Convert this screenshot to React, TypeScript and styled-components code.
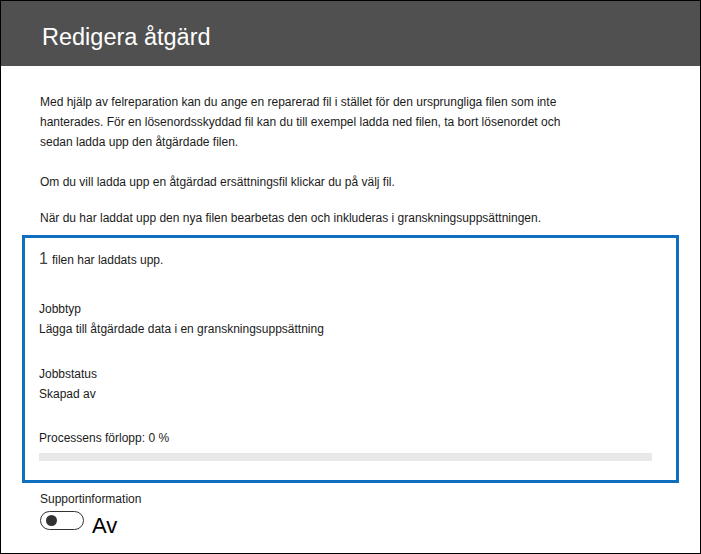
import React from 'react';
import styled, { createGlobalStyle } from 'styled-components';

const GlobalStyle = createGlobalStyle`
    html, body {
        margin: 0;
        padding: 0;
        background: #ffffff;
    }
    * {
        box-sizing: border-box;
    }
`;

const Frame = styled.div`
    width: 701px;
    height: 554px;
    border: 1px solid #000000;
    background: #ffffff;
    font-family: 'Liberation Sans', Arial, sans-serif;
    color: #1b1b1b;
    overflow: hidden;
    display: flex;
    flex-direction: column;
`;

const Header = styled.div`
    height: 65px;
    flex-shrink: 0;
    background: #505050;
    display: flex;
    align-items: center;
    padding-left: 41px;
    padding-top: 8px;
`;

const Title = styled.h1`
    margin: 0;
    font-size: 23.5px;
    font-weight: 400;
    color: #ffffff;
`;

const Body = styled.div`
    padding: 26px 21px 0 21px;
    display: flex;
    flex-direction: column;
`;

const Intro = styled.div`
    padding-left: 18px;
    display: flex;
    flex-direction: column;
`;

const Paragraph = styled.p<{ $gap?: number; $wide?: boolean }>`
    margin: 0 0 ${p => p.$gap ?? 0}px 0;
    font-size: 12px;
    line-height: 20px;
    width: ${p => (p.$wide ? 'auto' : '525px')};
`;

const StatusBox = styled.div`
    margin-top: 7px;
    border: 3px solid #106ebe;
    padding: 11px 24px 19px 14px;
    display: flex;
    flex-direction: column;
`;

const UploadLine = styled.div`
    font-size: 12px;
    line-height: 20px;
    display: flex;
    align-items: baseline;
    gap: 4px;
`;

const Count = styled.span`
    font-size: 16px;
    color: #444444;
`;

const Field = styled.div<{ $top: number }>`
    margin-top: ${p => p.$top}px;
    display: flex;
    flex-direction: column;
`;

const FieldText = styled.div`
    font-size: 12px;
    line-height: 20px;
`;

const ProgressLabel = styled.div`
    margin-top: 24px;
    font-size: 12px;
    line-height: 20px;
`;

const ProgressTrack = styled.div`
    margin-top: 5px;
    height: 8px;
    background: #e8e8e8;
`;

const ProgressFill = styled.div`
    height: 100%;
    background: #106ebe;
`;

const Support = styled.div`
    padding: 8px 0 0 18px;
    display: flex;
    flex-direction: column;
`;

const SupportLabel = styled.div`
    font-size: 12px;
    line-height: 16px;
`;

const ToggleRow = styled.div`
    margin-top: 2px;
    display: flex;
    align-items: flex-start;
    gap: 8px;
`;

const Toggle = styled.div`
    margin-top: 2px;
    width: 44px;
    height: 19px;
    border: 1px solid #333333;
    border-radius: 10px;
    padding-left: 5px;
    display: flex;
    align-items: center;
`;

const Knob = styled.div`
    width: 11px;
    height: 11px;
    border-radius: 50%;
    background: #333333;
`;

const ToggleText = styled.span`
    margin-top: 5px;
    font-size: 22px;
    line-height: 24px;
    color: #000000;
`;

const progress = 0;

export default function App() {
    return (
        <>
            <GlobalStyle />
            <Frame>
                <Header>
                    <Title>Redigera åtgärd</Title>
                </Header>
                <Body>
                    <Intro>
                        <Paragraph $gap={20}>
                            Med hjälp av felreparation kan du ange en reparerad fil i stället för den
                            ursprungliga filen som inte hanterades. För en lösenordsskyddad fil kan du
                            till exempel ladda ned filen, ta bort lösenordet och sedan ladda upp den
                            åtgärdade filen.
                        </Paragraph>
                        <Paragraph $gap={16}>
                            Om du vill ladda upp en åtgärdad ersättningsfil klickar du på välj fil.
                        </Paragraph>
                        <Paragraph $wide>
                            När du har laddat upp den nya filen bearbetas den och inkluderas i
                            granskningsuppsättningen.
                        </Paragraph>
                    </Intro>
                    <StatusBox>
                        <UploadLine>
                            <Count>1</Count>
                            <span>filen har laddats upp.</span>
                        </UploadLine>
                        <Field $top={29}>
                            <FieldText>Jobbtyp</FieldText>
                            <FieldText>Lägga till åtgärdade data i en granskningsuppsättning</FieldText>
                        </Field>
                        <Field $top={25}>
                            <FieldText>Jobbstatus</FieldText>
                            <FieldText>Skapad av</FieldText>
                        </Field>
                        <ProgressLabel>Processens förlopp: 0 %</ProgressLabel>
                        <ProgressTrack>
                            <ProgressFill style={{ width: `${progress}%` }} />
                        </ProgressTrack>
                    </StatusBox>
                    <Support>
                        <SupportLabel>Supportinformation</SupportLabel>
                        <ToggleRow>
                            <Toggle>
                                <Knob />
                            </Toggle>
                            <ToggleText>Av</ToggleText>
                        </ToggleRow>
                    </Support>
                </Body>
            </Frame>
        </>
    );
}
